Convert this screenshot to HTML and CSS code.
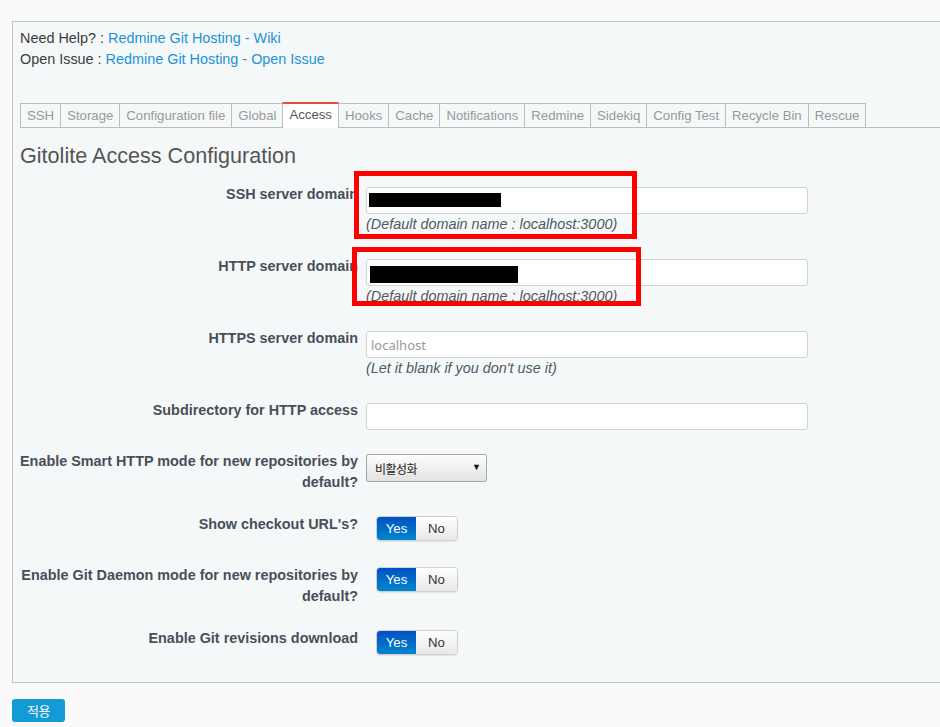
FILE: index.html
```html
<!DOCTYPE html>
<html>
<head>
<meta charset="utf-8">
<link rel="stylesheet" href="styles.css">
</head>
<body>
<div class="page">
  <div class="box">
    <div class="help">
      <p>Need Help? : <a href="#">Redmine Git Hosting - Wiki</a></p>
      <p>Open Issue : <a href="#">Redmine Git Hosting - Open Issue</a></p>
    </div>
    <ul class="tabs">
      <li><a href="#">SSH</a></li>
      <li><a href="#">Storage</a></li>
      <li><a href="#">Configuration file</a></li>
      <li><a href="#">Global</a></li>
      <li><a href="#" class="active">Access</a></li>
      <li><a href="#">Hooks</a></li>
      <li><a href="#">Cache</a></li>
      <li><a href="#">Notifications</a></li>
      <li><a href="#">Redmine</a></li>
      <li><a href="#">Sidekiq</a></li>
      <li><a href="#">Config Test</a></li>
      <li><a href="#">Recycle Bin</a></li>
      <li><a href="#">Rescue</a></li>
    </ul>
    <h2 class="title">Gitolite Access Configuration</h2>
    <div class="form">
      <div class="row">
        <label class="lbl">SSH server domain</label>
        <div class="field">
          <div class="input-wrap"><input class="text" type="text"><span class="redact redact-1"></span></div>
          <em class="note">(Default domain name : localhost:3000)</em>
        </div>
      </div>
      <div class="row">
        <label class="lbl">HTTP server domain</label>
        <div class="field">
          <div class="input-wrap"><input class="text" type="text"><span class="redact redact-2"></span></div>
          <em class="note">(Default domain name : localhost:3000)</em>
        </div>
      </div>
      <div class="row">
        <label class="lbl">HTTPS server domain</label>
        <div class="field">
          <div class="input-wrap"><input class="text" type="text" placeholder="localhost"></div>
          <em class="note">(Let it blank if you don't use it)</em>
        </div>
      </div>
      <div class="row">
        <label class="lbl">Subdirectory for HTTP access</label>
        <div class="field">
          <div class="input-wrap"><input class="text" type="text"></div>
        </div>
      </div>
      <div class="row">
        <label class="lbl">Enable Smart HTTP mode for new repositories by default?</label>
        <div class="field">
          <div class="select-wrap">
            <select class="select"><option>비활성화</option></select>
            <span class="arrow">▼</span>
          </div>
        </div>
      </div>
      <div class="row">
        <label class="lbl">Show checkout URL's?</label>
        <div class="field toggle-cell">
          <div class="toggle"><span class="yes">Yes</span><span class="no">No</span></div>
        </div>
      </div>
      <div class="row">
        <label class="lbl">Enable Git Daemon mode for new repositories by default?</label>
        <div class="field toggle-cell">
          <div class="toggle"><span class="yes">Yes</span><span class="no">No</span></div>
        </div>
      </div>
      <div class="row">
        <label class="lbl">Enable Git revisions download</label>
        <div class="field toggle-cell">
          <div class="toggle"><span class="yes">Yes</span><span class="no">No</span></div>
        </div>
      </div>
    </div>
    <span class="mark mark-1"></span>
    <span class="mark mark-2"></span>
  </div>
  <button class="apply" type="button">적용</button>
</div>
</body>
</html>
```
FILE: styles.css
```css
html, body {
  margin: 0;
  padding: 0;
}
body {
  background: #fafafa;
  font-family: "Liberation Sans", Arial, sans-serif;
  font-size: 14.4px;
  color: #484848;
  overflow: hidden;
}
.page {
  padding: 21px 0 0 12px;
}
.box {
  position: relative;
  background: #f5f8f9;
  border: 1px solid #c3c3c3;
  border-right: none;
  padding: 6px 0 24px 7px;
}
.help p {
  margin: 0;
  line-height: 21px;
  color: #3b3b3b;
}
.help a {
  color: #1a93d6;
  text-decoration: none;
}
.tabs {
  list-style: none;
  margin: 33px 0 0 0;
  padding: 0;
  display: flex;
  border-bottom: 1px solid #bdbdbd;
  height: 24px;
}
.tabs li {
  margin-left: -1px;
}
.tabs li:first-child {
  margin-left: 0;
}
.tabs a {
  display: block;
  height: 23px;
  line-height: 23px;
  padding: 0 6px;
  border: 1px solid #bdbdbd;
  border-bottom: none;
  font-size: 13.2px;
  color: #999;
  text-decoration: none;
  background: #f5f8f9;
}
.tabs a.active {
  position: relative;
  background: #fff;
  color: #555;
  height: 24px;
  border-top: 2px solid #ec4a3c;
  line-height: 22px;
  margin-top: -1px;
  z-index: 1;
}
.title {
  margin: 16px 0 0 0;
  font-size: 21.6px;
  font-weight: normal;
  line-height: 24px;
  color: #555;
}
.form {
  margin-top: 16px;
}
.row {
  display: grid;
  grid-template-columns: 338px 1fr;
  column-gap: 8px;
  margin-bottom: 21px;
}
.row:last-child {
  margin-bottom: 0;
}
.lbl {
  text-align: right;
  font-weight: bold;
  line-height: 21px;
  color: #484f58;
}
.field {
  display: flex;
  flex-direction: column;
  align-items: flex-start;
}
.input-wrap {
  position: relative;
  margin-top: 3px;
}
.text {
  display: block;
  box-sizing: border-box;
  width: 442px;
  height: 27px;
  margin: 0;
  padding: 0 4px;
  border: 1px solid #d2d2d2;
  border-radius: 3px;
  background: #fff;
  font-family: "Noto Sans", sans-serif;
  font-size: 13px;
  color: #333;
}
.text::placeholder {
  color: #999;
}
.redact {
  position: absolute;
  background: #000;
}
.redact-1 {
  left: 3px;
  top: 6px;
  width: 132px;
  height: 14px;
}
.redact-2 {
  left: 4px;
  top: 7px;
  width: 148px;
  height: 17px;
}
.note {
  line-height: 21px;
  font-style: italic;
  color: #4f5963;
}
.select-wrap {
  position: relative;
  margin-top: 3px;
}
.select {
  display: block;
  appearance: none;
  -webkit-appearance: none;
  box-sizing: border-box;
  width: 121px;
  height: 28px;
  margin: 0;
  padding: 0 0 0 8px;
  border: 1px solid #a8a8a8;
  border-radius: 2px;
  background: linear-gradient(#fdfdfd, #e2e2e2);
  font-family: "Noto Sans CJK KR", sans-serif;
  font-size: 12px;
  letter-spacing: -0.5px;
  color: #222;
}
.arrow {
  position: absolute;
  right: 6px;
  top: 8px;
  font-size: 9px;
  color: #111;
  pointer-events: none;
}
.toggle-cell {
  min-height: 30px;
}
.toggle {
  display: flex;
  margin: 2px 0 0 10px;
  height: 25px;
  box-sizing: border-box;
  border-radius: 4px;
  border: 1px solid #cfcfcf;
  overflow: hidden;
  font-size: 13.2px;
  line-height: 23px;
  box-shadow: 0 1px 1px rgba(0,0,0,0.08);
}
.yes {
  width: 39px;
  text-align: center;
  color: #fff;
  background: linear-gradient(#0052c4, #0085cc);
}
.no {
  width: 41px;
  text-align: center;
  color: #333;
  background: linear-gradient(#ffffff, #e8e8e8);
}
.mark {
  position: absolute;
  box-sizing: border-box;
  border: 5px solid #ff0000;
  z-index: 2;
}
.mark-1 {
  left: 341px;
  top: 149px;
  width: 283px;
  height: 68px;
}
.mark-2 {
  left: 339px;
  top: 225px;
  width: 289px;
  height: 59px;
}
.apply {
  display: block;
  margin-top: 16px;
  width: 53px;
  height: 23px;
  padding: 0;
  border: none;
  border-radius: 3px;
  background: #149ad6;
  color: #fff;
  font-family: "Noto Sans CJK KR", sans-serif;
  font-size: 13px;
  letter-spacing: -0.5px;
}
```
